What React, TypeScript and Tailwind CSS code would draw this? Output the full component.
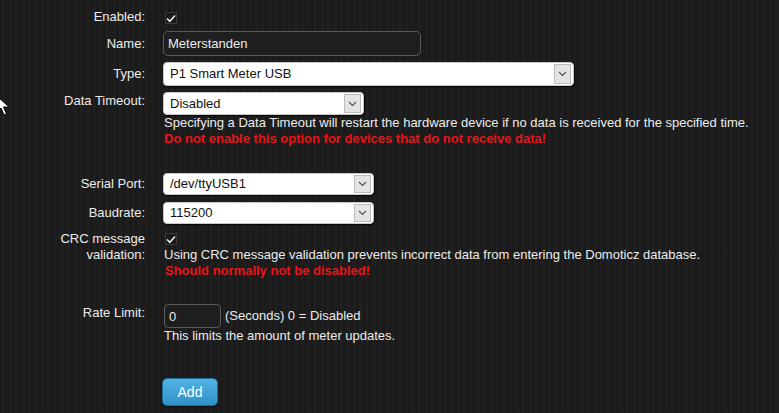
import React from "react";

const font = { fontFamily: '"Liberation Sans", Arial, sans-serif' };

function Check() {
  return (
    <div className="w-[12px] h-[12px] bg-[#1a1a1a] border border-[#3a3a3a] flex items-center justify-center">
      <svg width="10" height="9" viewBox="0 0 10 9">
        <path d="M1 4.5 L3.8 7.3 L9 1.5" fill="none" stroke="#f2f2f2" strokeWidth="1.5" />
      </svg>
    </div>
  );
}

function Select({ value, width, height = 23 }: { value: string; width: number; height?: number }) {
  return (
    <div
      className="relative bg-white rounded-[4px] border border-[#c8c8c8] shadow-[1px_1px_1px_rgba(0,0,0,0.8)] flex items-center text-[13px] text-[#111] pl-[6px]"
      style={{ width, height }}
    >
      <span>{value}</span>
      <div className="absolute right-[2px] top-[1px] bottom-[1px] w-[17px] bg-[#e4e4e4] border border-[#bdbdbd] flex items-center justify-center">
        <svg width="9" height="6" viewBox="0 0 9 6">
          <path d="M1 1 L4.5 4.5 L8 1" fill="none" stroke="#555" strokeWidth="1.2" />
        </svg>
      </div>
    </div>
  );
}

function Label({ children, className = "" }: { children: React.ReactNode; className?: string }) {
  return <div className={`w-[145px] shrink-0 text-right text-[13px] leading-[16px] text-[#ececec] ${className}`}>{children}</div>;
}

export default function App() {
  return (
    <div
      className="relative w-[779px] h-[413px] overflow-hidden bg-[#1b1b1b] bg-[repeating-linear-gradient(90deg,#191919_0px,#1c1c1c_2px,#232323_3px,#1a1a1a_5px,#1d1d1d_9px,#202020_11px,#191919_13px)]"
      style={font}
    >
      <div className="flex flex-col pt-[9px]">
        {/* Enabled */}
        <div className="flex">
          <Label>Enabled:</Label>
          <div className="ml-[20px] pt-[3px]">
            <Check />
          </div>
        </div>

        {/* Name */}
        <div className="flex items-center mt-[6px]">
          <Label>Name:</Label>
          <div className="ml-[18px] w-[258px] h-[25px] rounded-[5px] border border-[#5a5a5a] bg-[#1e1e1e] flex items-center pl-[4px] text-[13px] text-[#ececec]">
            Meterstanden
          </div>
        </div>

        {/* Type */}
        <div className="flex items-center mt-[6px]">
          <Label>Type:</Label>
          <div className="ml-[18px]">
            <Select value="P1 Smart Meter USB" width={411} height={24} />
          </div>
        </div>

        {/* Data Timeout */}
        <div className="flex mt-[6px]">
          <Label className="pt-[1px]">Data Timeout:</Label>
          <div className="ml-[18px] flex flex-col">
            <Select value="Disabled" width={201} height={23} />
            <div className="text-[13px] leading-[16px] text-[#ececec] ml-[1px]">
              Specifying a Data Timeout will restart the hardware device if no data is received for the specified time.
            </div>
            <div className="text-[13px] leading-[16px] text-[#e8141a] font-bold ml-[1px]">
              Do not enable this option for devices that do not receive data!
            </div>
          </div>
        </div>

        {/* Serial Port */}
        <div className="flex items-center mt-[26px]">
          <Label>Serial Port:</Label>
          <div className="ml-[18px]">
            <Select value="/dev/ttyUSB1" width={211} height={22} />
          </div>
        </div>

        {/* Baudrate */}
        <div className="flex items-center mt-[7px]">
          <Label>Baudrate:</Label>
          <div className="ml-[18px]">
            <Select value="115200" width={211} height={22} />
          </div>
        </div>

        {/* CRC */}
        <div className="flex mt-[7px]">
          <Label>
            CRC message
            <br />
            validation:
          </Label>
          <div className="ml-[20px] flex flex-col">
            <div className="h-[16px] pt-[2px]">
              <Check />
            </div>
            <div className="text-[13px] leading-[16px] text-[#ececec] -ml-[1px]">
              Using CRC message validation prevents incorrect data from entering the Domoticz database.
            </div>
            <div className="text-[13px] leading-[16px] text-[#e8141a] font-bold">Should normally not be disabled!</div>
          </div>
        </div>

        {/* Rate Limit */}
        <div className="flex mt-[25px]">
          <Label className="pt-[1px]">Rate Limit:</Label>
          <div className="ml-[19px] flex flex-col">
            <div className="flex items-center">
              <div className="w-[57px] h-[24px] rounded-[4px] border border-[#5a5a5a] bg-[#1e1e1e] flex items-center pl-[4px] pt-[2px] text-[13px] text-[#ececec]">
                0
              </div>
              <span className="ml-[4px] text-[13px] text-[#ececec]">(Seconds) 0 = Disabled</span>
            </div>
            <div className="text-[13px] leading-[16px] text-[#ececec]">This limits the amount of meter updates.</div>
          </div>
        </div>

        {/* Add */}
        <div className="flex mt-[34px]">
          <div className="w-[145px] shrink-0" />
          <button className="ml-[17px] w-[56px] h-[28px] rounded-[5px] bg-[linear-gradient(#52b3e3,#2f91c8)] border border-[#1f6e9a] text-white text-[14px] shadow-[0_1px_2px_rgba(0,0,0,0.6)]">
            Add
          </button>
        </div>
      </div>

      {/* mouse cursor */}
      <svg className="absolute left-[-4px] top-[95px]" width="16" height="22" viewBox="0 0 16 22">
        <path d="M1 1 L1 17 L5 13 L8 20 L10.5 19 L7.5 12 L13 12 Z" fill="#fff" stroke="#000" strokeWidth="1" />
      </svg>
    </div>
  );
}
